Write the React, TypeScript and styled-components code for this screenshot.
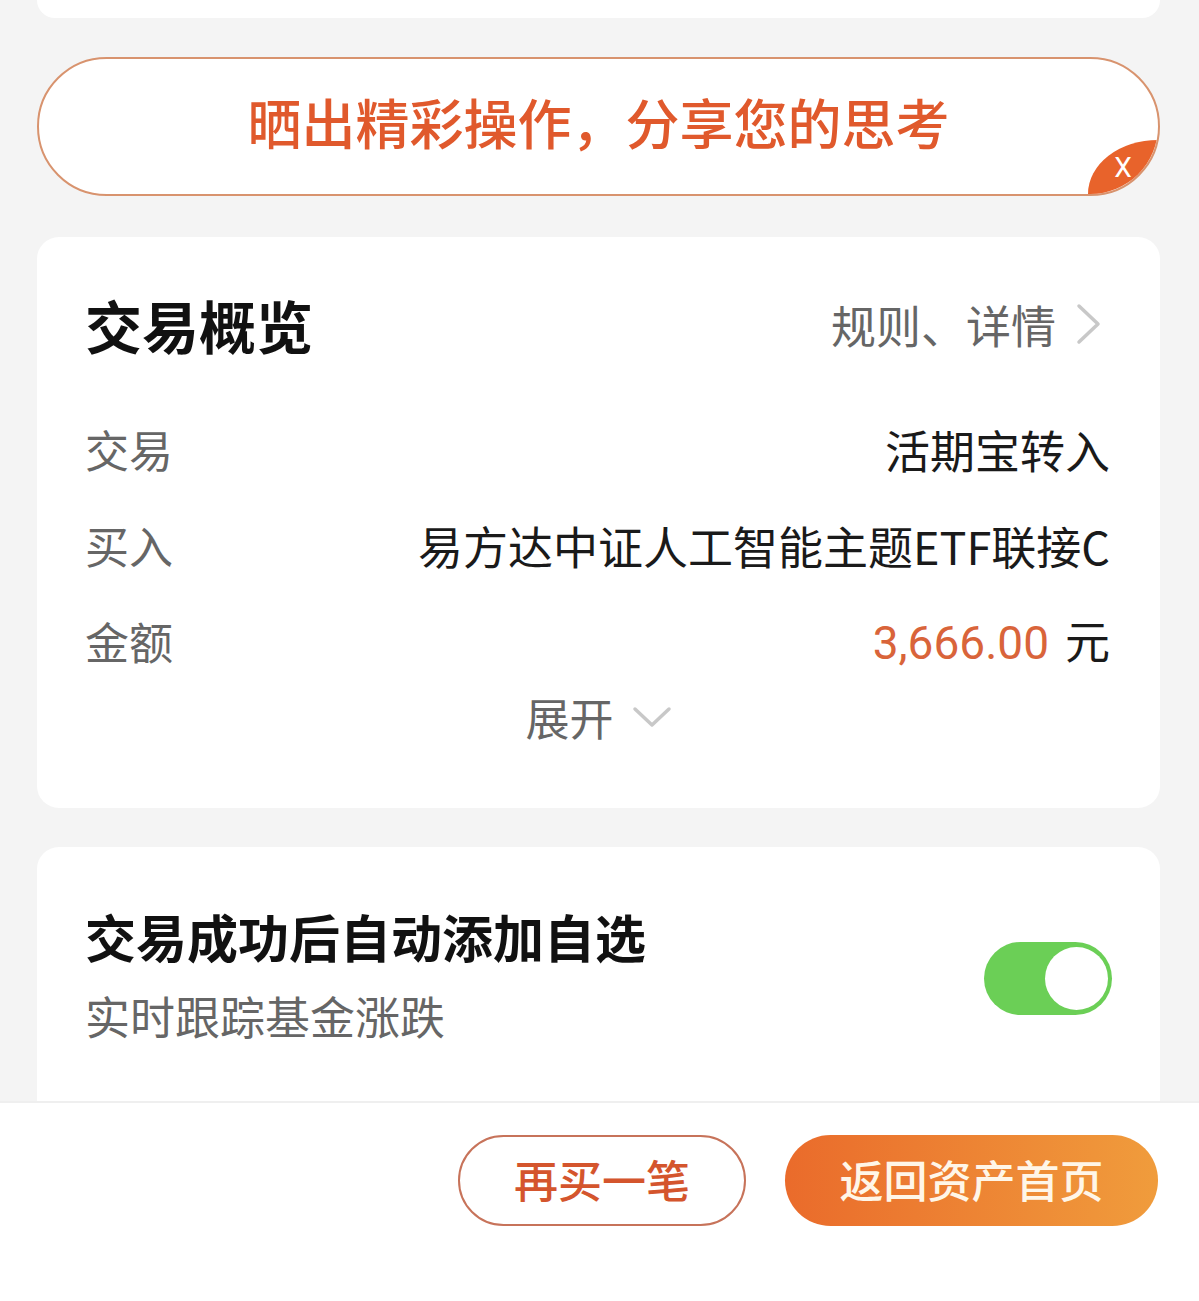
import React from "react";
import styled, { createGlobalStyle } from "styled-components";

const Global = createGlobalStyle`
  html, body { margin: 0; padding: 0; background: #f4f4f4; }
  body { font-family: "Noto Sans CJK SC", Roboto, sans-serif; }
  * { box-sizing: border-box; }
`;

const Page = styled.div`
  height: 1301px;
  display: flex;
  flex-direction: column;
  background: #f4f4f4;
  overflow: hidden;
`;

const Scroll = styled.div`
  flex: 1;
  overflow: hidden;
  padding: 0 39px 0 37px;
  display: flex;
  flex-direction: column;
`;

const TopCardTail = styled.div`
  height: 18px;
  background: #fff;
  border-radius: 0 0 22px 22px;
  flex-shrink: 0;
`;

const Banner = styled.div`
  position: relative;
  margin-top: 39px;
  height: 139px;
  flex-shrink: 0;
  border: 2px solid #d8936e;
  border-radius: 70px;
  background: #fff;
  overflow: hidden;
  display: flex;
  align-items: center;
  justify-content: center;
`;

const BannerText = styled.div`
  font-size: 54px;
  font-weight: 500;
  color: #e0592c;
  line-height: 1;
  margin-top: -9px;
`;

const CloseBadge = styled.div`
  position: absolute;
  right: 0;
  bottom: 0;
  width: 70px;
  height: 54px;
  background: #e8632b;
  border-top-left-radius: 100% 100%;
  color: #fff;
  font-family: Roboto, sans-serif;
  font-size: 28px;
  line-height: 1;
  display: flex;
  align-items: center;
  justify-content: center;
  padding: 2px 0 0 0;
`;

const Card = styled.div<{ $mt: number }>`
  margin-top: ${(p) => p.$mt}px;
  background: #fff;
  border-radius: 22px;
  flex-shrink: 0;
`;

const OverviewCard = styled(Card)`
  height: 571px;
  padding: 52px 50px 0 48px;
  display: flex;
  flex-direction: column;
`;

const Header = styled.div`
  display: flex;
  align-items: center;
  justify-content: space-between;
  height: 70px;
`;

const Title = styled.div`
  font-size: 57px;
  font-weight: 700;
  color: #111;
  line-height: 1;
`;

const HeaderLink = styled.div`
  display: flex;
  align-items: center;
  gap: 20px;
  color: #666;
  font-size: 45px;
  line-height: 1;
  margin-right: 8px;
`;

const Rows = styled.div`
  margin-top: 42px;
  display: flex;
  flex-direction: column;
`;

const Row = styled.div`
  height: 96px;
  display: flex;
  align-items: center;
  justify-content: space-between;
  font-size: 45px;
  line-height: 1;
`;

const Label = styled.div`
  color: #666;
  font-size: 44px;
`;

const Value = styled.div`
  color: #1a1a1a;
  display: flex;
  align-items: baseline;
  gap: 16px;
`;

const Amount = styled.span`
  color: #d9643a;
  font-family: Roboto, "Noto Sans CJK SC", sans-serif;
  font-size: 46px;
`;

const Expand = styled.div`
  height: 52px;
  display: flex;
  align-items: center;
  justify-content: center;
  gap: 18px;
  color: #666;
  font-size: 44px;
  line-height: 1;
  padding-left: 2px;
  margin-top: 2px;
`;

const AutoCard = styled(Card)`
  height: 330px;
  padding: 57px 48px 0 48px;
  display: flex;
  align-items: flex-start;
  justify-content: space-between;
`;

const AutoText = styled.div`
  display: flex;
  flex-direction: column;
`;

const AutoTitle = styled.div`
  font-size: 51px;
  font-weight: 700;
  color: #111;
  line-height: 64px;
`;

const AutoSub = styled.div`
  margin-top: 18px;
  font-size: 45px;
  color: #666;
  line-height: 60px;
`;

const Toggle = styled.div`
  margin-top: 38px;
  width: 128px;
  height: 73px;
  border-radius: 37px;
  background: #6bcf56;
  display: flex;
  align-items: center;
  justify-content: flex-end;
  padding: 4px;
`;

const Knob = styled.div`
  width: 63px;
  height: 63px;
  border-radius: 50%;
  background: #fff;
`;

const Footer = styled.div`
  height: 200px;
  flex-shrink: 0;
  background: #fff;
  border-top: 2px solid #efefef;
  display: flex;
  justify-content: flex-end;
  align-items: flex-start;
  gap: 39px;
  padding: 32px 41px 0 0;
`;

const Button = styled.button<{ $primary?: boolean }>`
  height: 91px;
  border-radius: 46px;
  font-family: "Noto Sans CJK SC", sans-serif;
  font-size: 44px;
  font-weight: 500;
  line-height: 1;
  cursor: pointer;
  display: flex;
  align-items: center;
  justify-content: center;
  padding: 0 0 4px 0;
  width: ${(p) => (p.$primary ? 373 : 288)}px;
  border: ${(p) => (p.$primary ? "none" : "2px solid #c7735a")};
  color: ${(p) => (p.$primary ? "#fff6e8" : "#d4552d")};
  background: ${(p) =>
    p.$primary ? "linear-gradient(90deg, #ea6b2b 0%, #f09c3c 100%)" : "#fff"};
`;

const ChevronRight = () => (
  <svg width="26" height="44" viewBox="0 0 26 44" fill="none">
    <path d="M3 4 L22 22 L3 40" stroke="#c8c8c8" strokeWidth="3.5" strokeLinecap="round" strokeLinejoin="round" />
  </svg>
);

const ChevronDown = () => (
  <svg width="40" height="24" viewBox="0 0 40 24" fill="none">
    <path d="M3 4 L20 20 L37 4" stroke="#c8c8c8" strokeWidth="3.5" strokeLinecap="round" strokeLinejoin="round" />
  </svg>
);

export default function App() {
  return (
    <>
      <Global />
      <Page>
        <Scroll>
          <TopCardTail />
          <Banner>
            <BannerText>晒出精彩操作，分享您的思考</BannerText>
            <CloseBadge>X</CloseBadge>
          </Banner>
          <OverviewCard $mt={41}>
            <Header>
              <Title>交易概览</Title>
              <HeaderLink>
                规则、详情
                <ChevronRight />
              </HeaderLink>
            </Header>
            <Rows>
              <Row>
                <Label>交易</Label>
                <Value>活期宝转入</Value>
              </Row>
              <Row>
                <Label>买入</Label>
                <Value>易方达中证人工智能主题ETF联接C</Value>
              </Row>
              <Row>
                <Label>金额</Label>
                <Value>
                  <Amount>3,666.00</Amount>元
                </Value>
              </Row>
            </Rows>
            <Expand>
              展开
              <ChevronDown />
            </Expand>
          </OverviewCard>
          <AutoCard $mt={39}>
            <AutoText>
              <AutoTitle>交易成功后自动添加自选</AutoTitle>
              <AutoSub>实时跟踪基金涨跌</AutoSub>
            </AutoText>
            <Toggle>
              <Knob />
            </Toggle>
          </AutoCard>
        </Scroll>
        <Footer>
          <Button>再买一笔</Button>
          <Button $primary>返回资产首页</Button>
        </Footer>
      </Page>
    </>
  );
}
